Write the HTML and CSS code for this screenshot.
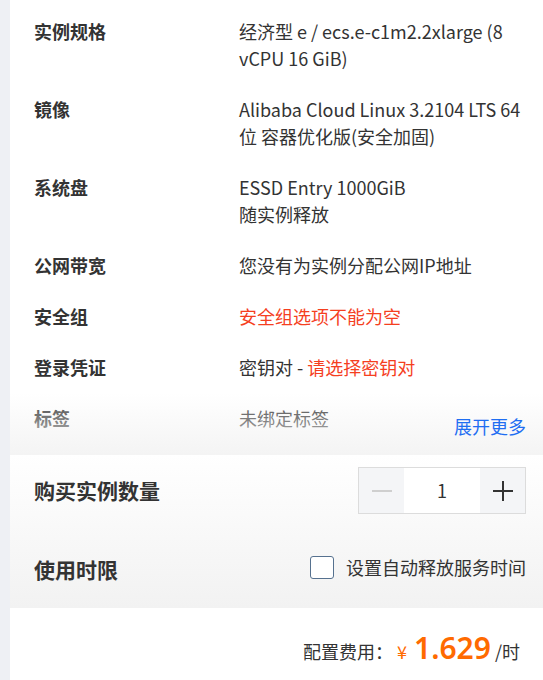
FILE: index.html
```html
<!DOCTYPE html>
<html lang="zh-CN">
<head>
<meta charset="utf-8">
<link rel="stylesheet" href="styles.css">
</head>
<body>
<div class="page">
  <section class="summary">
    <dl class="specs">
      <dt>实例规格</dt>
      <dd>经济型 e / ecs.e-c1m2.2xlarge (8 vCPU 16 GiB)</dd>
      <dt>镜像</dt>
      <dd>Alibaba Cloud Linux 3.2104 LTS 64 位 容器优化版(安全加固)</dd>
      <dt>系统盘</dt>
      <dd>ESSD Entry 1000GiB<br>随实例释放</dd>
      <dt>公网带宽</dt>
      <dd>您没有为实例分配公网IP地址</dd>
      <dt>安全组</dt>
      <dd class="error">安全组选项不能为空</dd>
      <dt>登录凭证</dt>
      <dd>密钥对 - <span class="error">请选择密钥对</span></dd>
      <dt>标签</dt>
      <dd>未绑定标签</dd>
    </dl>
    <div class="fade"></div>
    <a class="more" href="#">展开更多</a>
  </section>

  <section class="options">
    <div class="opt-row">
      <span class="opt-title">购买实例数量</span>
      <div class="stepper">
        <button class="step-btn minus" type="button" aria-label="减少"><span class="bar h"></span></button>
        <span class="step-val">1</span>
        <button class="step-btn plus" type="button" aria-label="增加"><span class="bar h"></span><span class="bar v"></span></button>
      </div>
    </div>
    <div class="opt-row">
      <span class="opt-title">使用时限</span>
      <label class="check">
        <span class="box"></span>
        <span>设置自动释放服务时间</span>
      </label>
    </div>
  </section>

  <section class="price">
    <span class="price-label">配置费用：</span>
    <span class="currency">¥</span>
    <span class="amount">1.629</span>
    <span class="unit">/时</span>
  </section>
</div>
</body>
</html>
```

FILE: styles.css
```css
* { box-sizing: border-box; }

html, body {
  margin: 0;
  padding: 0;
  background: #eef0f4;
}

body {
  font-family: "Noto Sans CJK SC", "Noto Sans", sans-serif;
  color: #333;
  font-size: 18px;
  line-height: 27px;
}

.page {
  margin-left: 10px;
  width: 533px;
  height: 680px;
  background: #fff;
  overflow: hidden;
}

.summary {
  position: relative;
  height: 455px;
  padding: 18px 8px 0 24px;
  background: #fff;
}

.specs {
  display: grid;
  grid-template-columns: 205px 1fr;
  row-gap: 24px;
  margin: 0;
}

.specs dt {
  font-weight: 700;
  color: #333;
}

.specs dd {
  margin: 0;
  color: #333;
}

.specs .error { color: #f53f1f; }

.fade {
  position: absolute;
  left: 0;
  right: 0;
  bottom: 0;
  height: 62px;
  background: linear-gradient(to bottom, rgba(255,255,255,0), rgba(243,243,243,0.92));
}

.more {
  position: absolute;
  right: 17px;
  bottom: 15px;
  color: #1f6ef2;
  text-decoration: none;
}

.options {
  height: 153px;
  padding: 12px 17px 15px 24px;
  display: flex;
  flex-direction: column;
  gap: 32px;
  background: linear-gradient(to bottom, #ffffff, #f2f2f2);
}

.opt-row {
  height: 47px;
  display: flex;
  align-items: center;
  justify-content: space-between;
}

.opt-title {
  font-size: 21px;
  font-weight: 700;
  color: #333;
}

.stepper {
  display: flex;
  width: 168px;
  height: 47px;
  border: 1px solid #dcdcdc;
}

.step-btn {
  position: relative;
  width: 45px;
  border: 0;
  padding: 0;
  margin: 0;
  background: #f4f5f7;
}

.bar {
  position: absolute;
  left: 50%;
  top: 50%;
  background: #333;
}

.bar.h {
  width: 20px;
  height: 2px;
  margin: -1px 0 0 -10px;
}

.bar.v {
  width: 2px;
  height: 20px;
  margin: -10px 0 0 -1px;
}

.minus .bar { background: #cfcfcf; }

.step-val {
  flex: 1;
  display: flex;
  align-items: center;
  justify-content: center;
  background: #fff;
  color: #333;
}

.check {
  display: flex;
  align-items: center;
  gap: 12px;
  margin-top: -4px;
  color: #333;
}

.box {
  width: 24px;
  height: 23px;
  border: 1.5px solid #56718f;
  border-radius: 3px;
  background: #fff;
}

.price {
  height: 72px;
  padding: 26px 23px 0 0;
  display: flex;
  justify-content: flex-end;
  align-items: baseline;
  background: #fff;
}

.price-label { color: #333; margin-right: 4px; }

.currency { color: #ff6a00; margin-right: 7px; }

.amount {
  color: #ff6a00;
  font-size: 30px;
  font-weight: 600;
  font-family: "Noto Sans", sans-serif;
  margin-right: 4px;
}

.unit { color: #333; }
```
